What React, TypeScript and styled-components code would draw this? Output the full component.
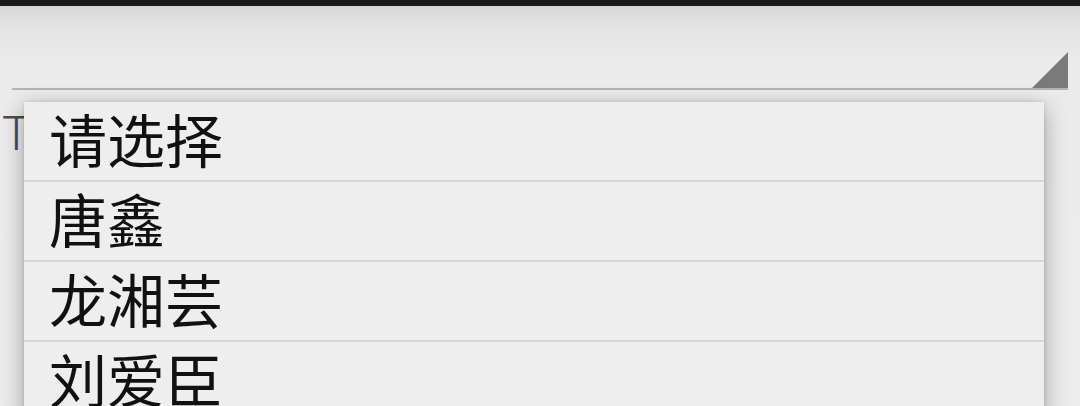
import styled, { createGlobalStyle } from 'styled-components';

const GlobalStyle = createGlobalStyle`
  html, body {
    margin: 0;
    padding: 0;
    background: #ececec;
  }
  body {
    font-family: "Noto Sans CJK SC", "Noto Sans", sans-serif;
  }
`;

const Screen = styled.div`
  position: relative;
  width: 1080px;
  height: 406px;
  overflow: hidden;
  background: linear-gradient(to bottom, #d6d6d6 0px, #e4e4e4 30px, #ebebeb 60px, #ececec 100%);
`;

const StatusBar = styled.div`
  height: 6px;
  background: #1b1b1b;
`;

/* Spinner cerrado, con la linea y el triangulo abajo a la derecha */
const Spinner = styled.div`
  margin: 0 12px;
  height: 82px;
  display: flex;
  align-items: flex-end;
  justify-content: flex-end;
  border-bottom: 2px solid #b4b4b4;
`;

const Label = styled.div`
  padding: 14px 0 0 2px;
  font-family: "Roboto", "Noto Sans", sans-serif;
  font-weight: 300;
  font-size: 48px;
  line-height: 60px;
  color: #4a4a4a;
`;

const Popup = styled.ul`
  position: absolute;
  left: 24px;
  top: 102px;
  width: 1020px;
  margin: 0;
  padding: 0;
  list-style: none;
  background: #eeeeee;
  box-shadow: 0 6px 22px rgba(0, 0, 0, 0.32), 0 0 4px rgba(0, 0, 0, 0.12);
`;

const Option = styled.li`
  height: 78px;
  display: flex;
  align-items: center;
  padding-left: 25px;
  border-bottom: 2px solid #d6d6d6;
  font-family: "Noto Sans CJK SC", sans-serif;
  font-size: 58px;
  color: #111111;
`;

const OptionText = styled.span`
  position: relative;
  top: -3px;
`;

const options = ['请选择', '唐鑫', '龙湘芸', '刘爱臣'];

export default function App() {
  return (
    <>
      <GlobalStyle />
      <Screen>
        <StatusBar />
        <Spinner>
          <svg width="36" height="36" viewBox="0 0 36 36" style={{ display: 'block' }}>
            <polygon points="36,0 36,36 0,36" fill="#7a7a7a" />
          </svg>
        </Spinner>
        <Label>TextView</Label>
        <Popup>
          {options.map((o) => (
            <Option key={o}>
              <OptionText>{o}</OptionText>
            </Option>
          ))}
        </Popup>
      </Screen>
    </>
  );
}
